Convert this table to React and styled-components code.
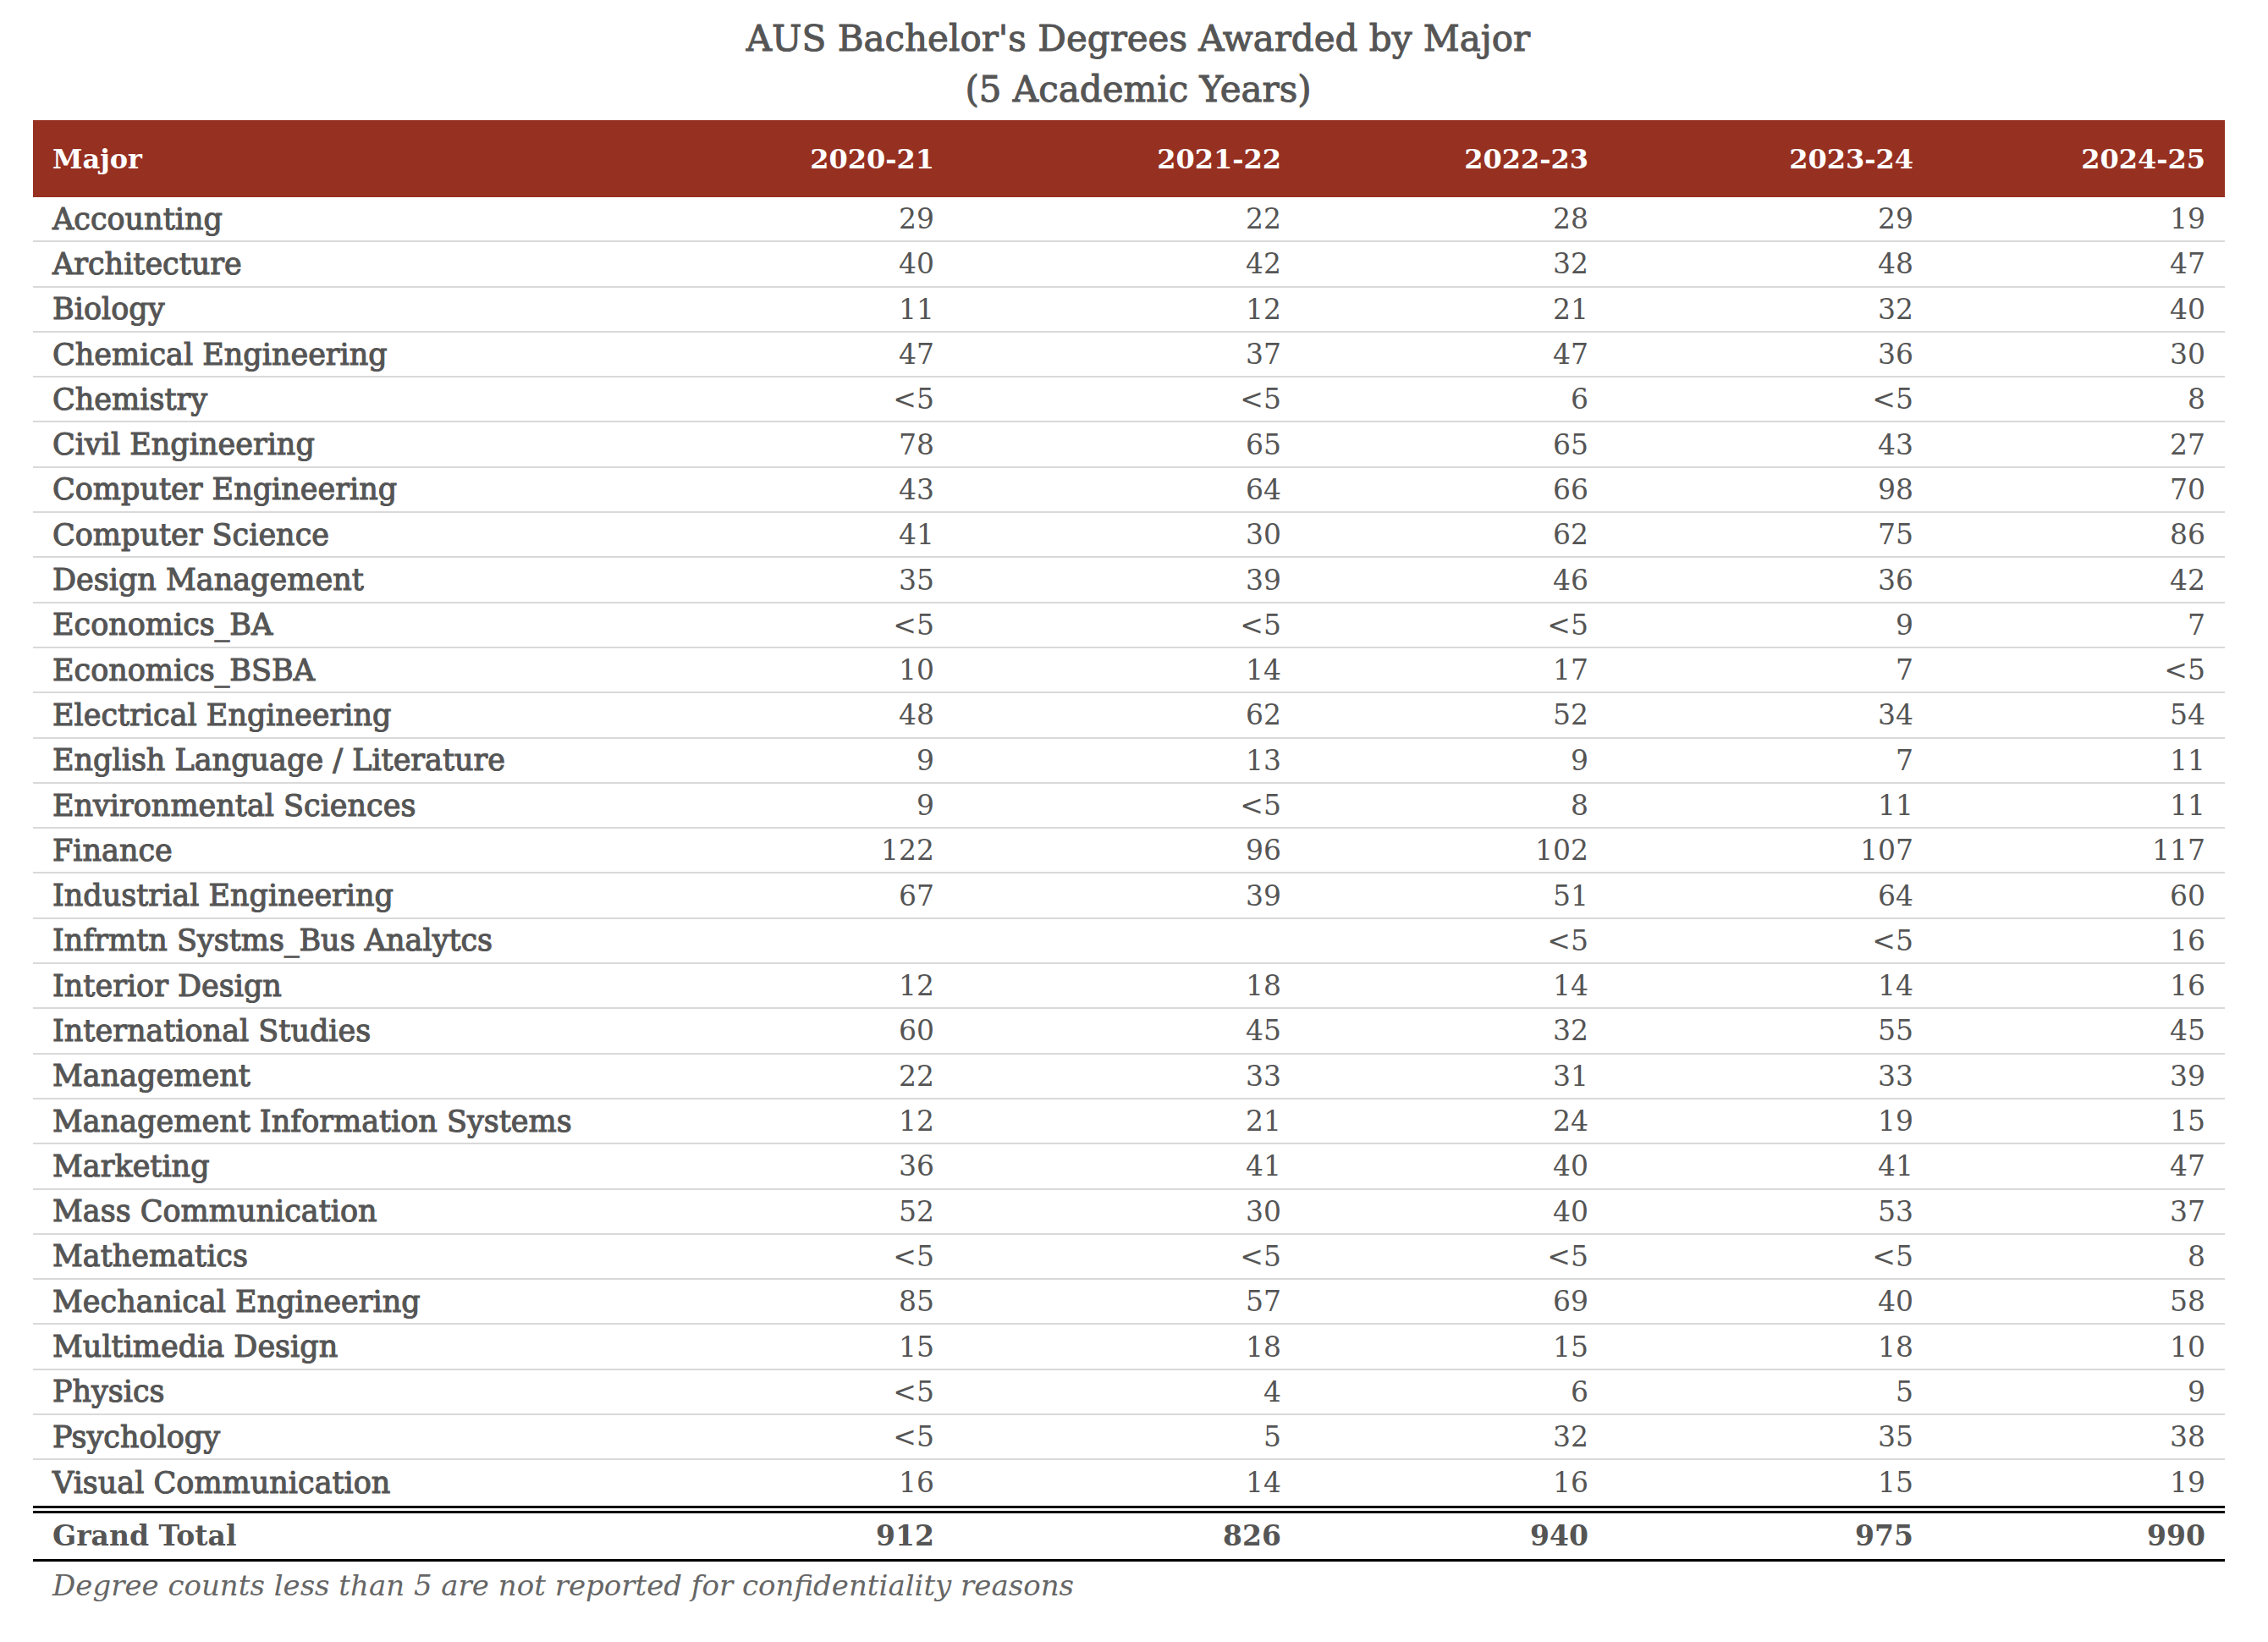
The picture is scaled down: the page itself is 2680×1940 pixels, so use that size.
import styled, { createGlobalStyle } from "styled-components";

const GlobalStyle = createGlobalStyle`
  html, body {
    margin: 0;
    padding: 0;
    background: #ffffff;
  }
  body {
    font-family: "DejaVu Serif", "Liberation Serif", serif;
    color: #555555;
  }
`;

const COLUMNS = "700px 388px 410px 363px 384px 345px";
const YEARS = ["2020-21", "2021-22", "2022-23", "2023-24", "2024-25"];

const rows = [
  ["Accounting", "29", "22", "28", "29", "19"],
  ["Architecture", "40", "42", "32", "48", "47"],
  ["Biology", "11", "12", "21", "32", "40"],
  ["Chemical Engineering", "47", "37", "47", "36", "30"],
  ["Chemistry", "<5", "<5", "6", "<5", "8"],
  ["Civil Engineering", "78", "65", "65", "43", "27"],
  ["Computer Engineering", "43", "64", "66", "98", "70"],
  ["Computer Science", "41", "30", "62", "75", "86"],
  ["Design Management", "35", "39", "46", "36", "42"],
  ["Economics_BA", "<5", "<5", "<5", "9", "7"],
  ["Economics_BSBA", "10", "14", "17", "7", "<5"],
  ["Electrical Engineering", "48", "62", "52", "34", "54"],
  ["English Language / Literature", "9", "13", "9", "7", "11"],
  ["Environmental Sciences", "9", "<5", "8", "11", "11"],
  ["Finance", "122", "96", "102", "107", "117"],
  ["Industrial Engineering", "67", "39", "51", "64", "60"],
  ["Infrmtn Systms_Bus Analytcs", "", "", "<5", "<5", "16"],
  ["Interior Design", "12", "18", "14", "14", "16"],
  ["International Studies", "60", "45", "32", "55", "45"],
  ["Management", "22", "33", "31", "33", "39"],
  ["Management Information Systems", "12", "21", "24", "19", "15"],
  ["Marketing", "36", "41", "40", "41", "47"],
  ["Mass Communication", "52", "30", "40", "53", "37"],
  ["Mathematics", "<5", "<5", "<5", "<5", "8"],
  ["Mechanical Engineering", "85", "57", "69", "40", "58"],
  ["Multimedia Design", "15", "18", "15", "18", "10"],
  ["Physics", "<5", "4", "6", "5", "9"],
  ["Psychology", "<5", "5", "32", "35", "38"],
  ["Visual Communication", "16", "14", "16", "15", "19"],
];

const totals = ["912", "826", "940", "975", "990"];

const Page = styled.div`
  width: 2680px;
  padding: 16px 51px 0 39px;
  box-sizing: border-box;
`;

const Title = styled.h1`
  margin: 0 0 6px;
  padding-left: 22px;
  font-size: 42px;
  line-height: 60px;
  font-weight: normal;
  -webkit-text-stroke: 1px #555555;
  text-align: center;
  color: #555555;
`;

const Table = styled.div`
  width: 2590px;
`;

const HeaderRow = styled.div`
  display: grid;
  grid-template-columns: ${COLUMNS};
  height: 91px;
  align-items: center;
  background: #963021;
  color: #ffffff;
  font-weight: bold;
  font-size: 32px;
`;

const Row = styled.div`
  display: grid;
  grid-template-columns: ${COLUMNS};
  align-items: center;
  box-sizing: border-box;
  height: ${(p) => (p.$total ? "57px" : "53.3px")};
  border-bottom: ${(p) => p.$border};
  font-size: 33px;
`;

const Cell = styled.div`
  padding: 0 23px;
  text-align: right;
  font-weight: ${(p) => (p.$bold ? "bold" : "normal")};
  white-space: nowrap;
`;

const Label = styled.div`
  padding: 0 23px;
  text-align: left;
  font-size: 35px;
  font-weight: normal;
  -webkit-text-stroke: 1.1px #555555;
  white-space: nowrap;
`;

const HeadLabel = styled(Cell)`
  text-align: left;
`;

const TotalLabel = styled(Cell)`
  text-align: left;
`;

const DoubleRule = styled.div`
  height: 3px;
  border-top: 3px solid #000;
  border-bottom: 3px solid #000;
`;

const Note = styled.p`
  margin: 8px 0 0 23px;
  font-style: italic;
  font-size: 34px;
  color: #666666;
`;

export default function App() {
  return (
    <Page>
      <GlobalStyle />
      <Title>
        AUS Bachelor's Degrees Awarded by Major
        <br />
        (5 Academic Years)
      </Title>
      <Table>
        <HeaderRow>
          <HeadLabel $bold>Major</HeadLabel>
          {YEARS.map((y) => (
            <Cell key={y} $bold>{y}</Cell>
          ))}
        </HeaderRow>
        {rows.map((r, i) => (
          <Row
            key={r[0]}
            $border={i === rows.length - 1 ? "none" : "2px solid #d9d9d9"}
          >
            <Label>{r[0]}</Label>
            {r.slice(1).map((v, j) => (
              <Cell key={j}>{v}</Cell>
            ))}
          </Row>
        ))}
        <DoubleRule />
        <Row $total $border="3px solid #000">
          <TotalLabel $bold>Grand Total</TotalLabel>
          {totals.map((t, j) => (
            <Cell key={j} $bold>{t}</Cell>
          ))}
        </Row>
      </Table>
      <Note>Degree counts less than 5 are not reported for confidentiality reasons</Note>
    </Page>
  );
}
